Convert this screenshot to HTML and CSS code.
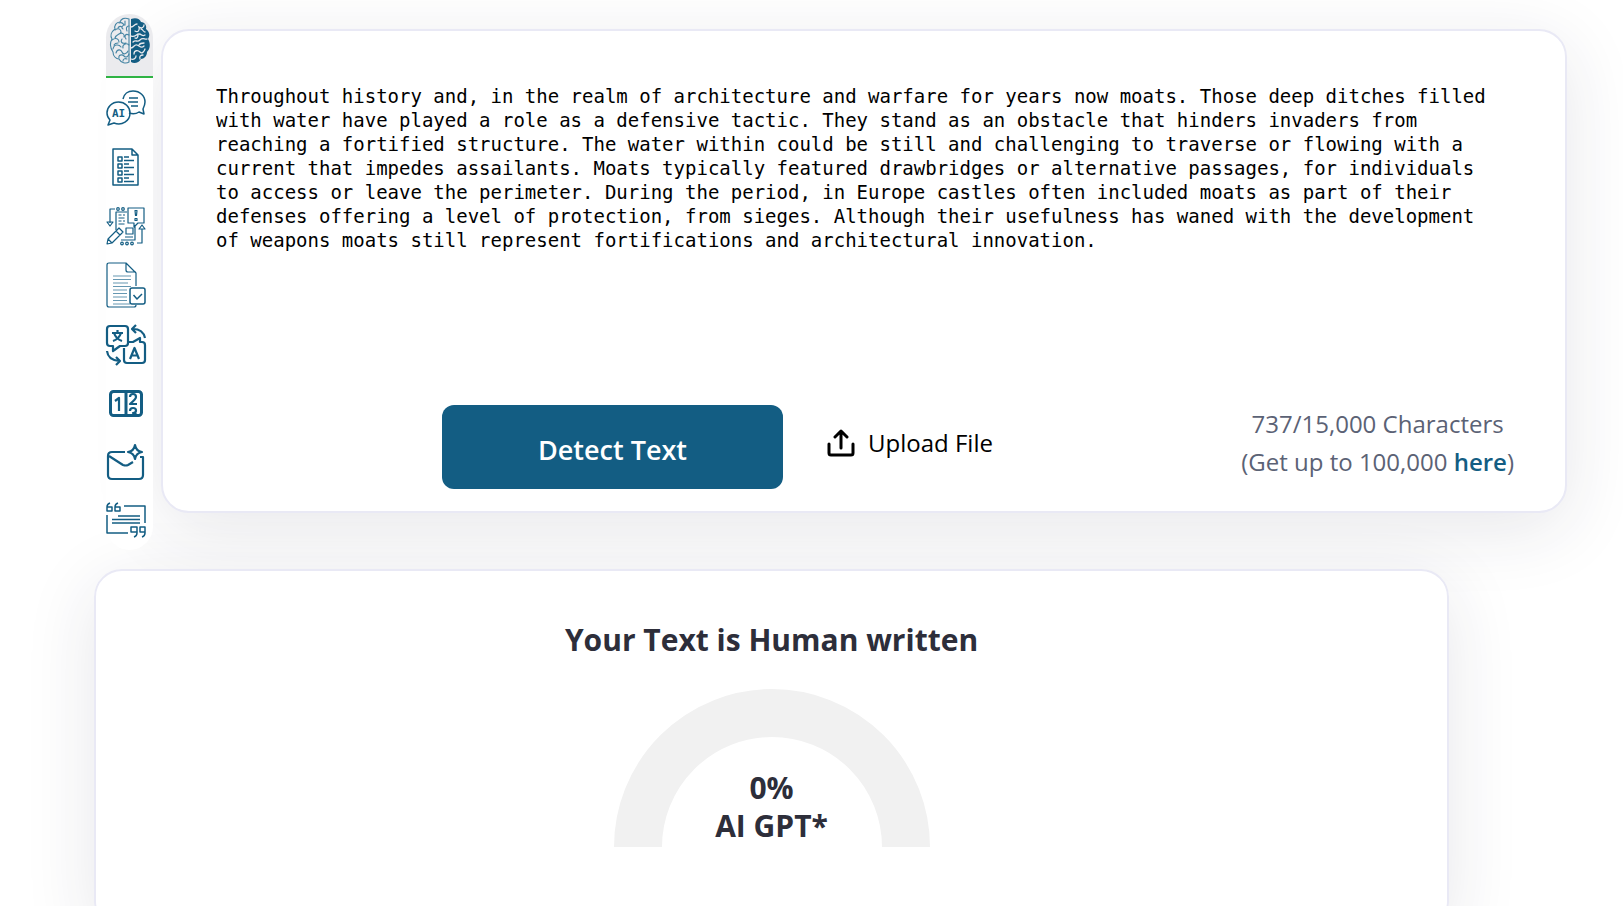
FILE: index.html
```html
<!DOCTYPE html>
<html lang="en">
<head>
<meta charset="utf-8">
<meta name="viewport" content="width=device-width, initial-scale=1">
<title>AI Detector</title>
<link rel="stylesheet" href="styles.css">
</head>
<body>
<main class="page">
  <section class="workspace">
    <nav class="tools" aria-label="Tools">
      <a class="tool tool-active" href="#detector" aria-label="AI detector">
        <svg class="icon icon-brain" viewBox="0 0 40 46">
          <path fill="#135d83" d="M21 1c5-2 9 0 10 3 4 0 6 4 5 7 4 3 4 7 2 10 3 5 2 10-1 13 0 4-3 7-6 7-2 4-7 5-10 3z"/>
          <g fill="none" stroke="#e9eaee" stroke-width="1.3" stroke-linecap="round">
            <path d="M21 9c3 0 3-3 6-3M25 13c3 2 5-1 4-4 3 2 5 0 5-2M21 18c4 2 5-2 8-2s3 3 6 1M23 24c3-3 4 1 7-2s5 0 7-1M21 30c3 0 3-4 6-3s4 4 7 1M24 36c0-4 4-4 6-2s4 0 5-3M21 41c3 1 5-1 5-3M30 41c-1-3 1-4 3-4M31 11c2 0 2 3 4 3M25 20c2 1 3-1 3-3M29 27c1-2 4-2 5-2"/>
          </g>
          <g fill="none" stroke="#4685a4" stroke-width="1.1" stroke-linecap="round">
            <path d="M19 1c-5-2-8 0-9 3-4 0-6 4-5 7-4 3-5 7-3 10-3 5-1 10 1 13 0 4 3 7 6 7 2 4 7 5 10 3z"/>
            <path d="M9 5c2-1 4 0 5 2M15 3v4c-3 0-4 3-2 4M19 8c-3 0-3 3-2 5M5 12c4-3 6 0 6 2s-5 2-6 6M9 16c3-2 6 0 5 3M19 17c-4-2-5 2-3 4M2 22c4-3 7-1 7 2M12 21c-2 3 0 5 4 4M19 27c-3-3-7 0-6 3M3 31c1-5 6-5 8-2M6 35c1-4 5-4 6-1s5 2 6-1M9 40c-1-3 3-4 5-2s4 1 5-2M13 43c0-2 2-3 4-2M4 27c1-2 3-2 4-2M8 10c1-2 3-2 4-1"/>
          </g>
        </svg>
      </a>
      <a class="tool" href="#chat" aria-label="AI chat">
        <svg class="icon line" viewBox="0 0 40 40">
          <path d="M17 11C18 6 22 3 27 3c7 0 12 5 12 11 0 3-1 5-2 7l1 5-5-2c-3 2-7 2-10 1"/>
          <path d="M12.500 14C6 14 1 19 1 25c0 3 1 5 3 7l-2 5 6-2c8 3 16-2 16-10 0-6-5-11-11.500-11z"/>
          <path d="M23 10h9M22 14h10M25 18h7"/>
          <text class="glyph" x="12.500" y="29" font-size="11">AI</text>
        </svg>
      </a>
      <a class="tool" href="#summary" aria-label="Summarizer">
        <svg class="icon line" viewBox="0 0 40 40">
          <path d="M7 2h19l6 6v30H7zM26 2v6h6"/>
          <path d="M12 10h4v4h-4zM12 17h4v4h-4zM12 24h4v4h-4zM12 31h4v4h-4z"/>
          <path d="M18 10h5M18 13.500h10M18 17h5M18 20.500h10M18 24h5M18 27.500h10M18 31h5M18 34.500h10"/>
        </svg>
      </a>
      <a class="tool" href="#paraphrase" aria-label="Paraphraser">
        <svg class="icon line thin" viewBox="0 0 40 40">
          <path d="M9 3H4v14M1 16h6l-3 4zM36 23v14h-5M33 23h6l-3-4z"/>
          <path d="M21 6H10v18M15 34h14V19M22 2h16v15h-6l-4 4v-4h-6z"/>
          <path d="M12.500 9h3M17 9h2M12.500 12h6M12.500 15h3M17 15h2M12.500 18h6M20 22h7v6h-7zM19 31h8"/>
          <path d="M2 33L13 22l4 4L6 37l-5 1zM2 33l4 4M10 25l4 4"/>
          <path d="M29 4.500h2l-.5 5h-1zM29 12.500h2v2h-2z"/>
          <g fill="#fff"><circle cx="12" cy="3" r="1.300"/><circle cx="17" cy="3" r="1.300"/><circle cx="16" cy="37.500" r="1.300"/><circle cx="21" cy="37.500" r="1.300"/><circle cx="26" cy="37.500" r="1.300"/></g>
        </svg>
      </a>
      <a class="tool" href="#grammar" aria-label="Grammar check">
        <svg class="icon icon-tall line" viewBox="0 0 40 46">
          <g stroke-width="1.200"><path d="M23 45H3q-2 0-2-2V3q0-2 2-2h17l10 10v13M30 43q0 2-2 2h-5M20 1v7q0 2 2 2h8"/>
          <path d="M7 14h18M7 17.500h18M7 21h15M7 24.500h18M7 28h14M7 31.500h14M7 35h14M7 38.500h14M7 42h17" stroke="#6698b2"/></g>
          <rect x="24" y="26" width="15" height="16" rx="2"/>
          <path d="M27.500 33l3.500 4 5-5"/>
        </svg>
      </a>
      <a class="tool" href="#translate" aria-label="Translator">
        <svg class="icon line bold" viewBox="0 0 40 40">
          <path d="M4 2h15q3 0 3 3v14q0 3-3 3h-5l-7 5v-5H4q-3 0-3-3V5q0-3 3-3z"/>
          <path d="M22 18h5l7-4v4h2q3 0 3 3v15q0 3-3 3H21q-3 0-3-3V24"/>
          <path d="M6 9h11M11.500 6v3M8 9q2 6 8 8M15 9q-2 6-8 8M30 1l-4 4 4 4M27 5q10 0 12 9M10 33l4 4-4 4M13 37Q2 36 1 27"/>
          <path d="M24 35l4.500-11L33 35M25.500 31.500h6"/>
        </svg>
      </a>
      <a class="tool" href="#counter" aria-label="Word counter">
        <svg class="icon line bold" viewBox="0 0 40 40">
          <rect class="heavy" x="4.500" y="8.500" width="31" height="24" rx="3"/>
          <path class="heavy" d="M20 8v25"/>
          <path d="M9 18l4-3v13M24 14q0-3 3-3t3 3q0 2-6 7h7M24 28q0-3 3-3t3 2.500-3 2.500q3 0 3 2"/>
        </svg>
      </a>
      <a class="tool" href="#email" aria-label="Email writer">
        <svg class="icon line bold" viewBox="0 0 40 40">
          <path d="M19 10H6q-4 0-4 4v19q0 4 4 4h27q4 0 4-4V15h-3"/>
          <path d="M3 14l14 9q3 1 5 0l5-3"/>
          <path fill="#fff" d="M29 3q1 6 7 7-6 1-7 7-1-6-7-7 6-1 7-7z"/>
        </svg>
      </a>
      <a class="tool" href="#citation" aria-label="Citation generator">
        <svg class="icon line" viewBox="0 0 40 40">
          <path d="M4 2Q1 3 1 6v4h5V6H1M12 2q-3 1-3 4v4h5V6H9M18 5h21v17M1 14v18h21"/>
          <path d="M12 15h22M6 18.500h28M6 22h28"/>
          <path d="M28 36q3-1 3-4v-6h-6v5h6M36 36q3-1 3-4v-6h-5v5h5"/>
        </svg>
      </a>
    </nav>

    <form class="card editor" id="detector">
      <textarea class="editor-text" aria-label="Text to check" spellcheck="false">Throughout history and, in the realm of architecture and warfare for years now moats. Those deep ditches filled with water have played a role as a defensive tactic. They stand as an obstacle that hinders invaders from reaching a fortified structure. The water within could be still and challenging to traverse or flowing with a current that impedes assailants. Moats typically featured drawbridges or alternative passages, for individuals to access or leave the perimeter. During the period, in Europe castles often included moats as part of their defenses offering a level of protection, from sieges. Although their usefulness has waned with the development of weapons moats still represent fortifications and architectural innovation.</textarea>
      <div class="actions">
        <button class="detect" type="button">Detect Text</button>
        <button class="upload" type="button">
          <svg class="upload-icon" viewBox="0 0 28 28"><path d="M2 15v9q0 2 2 2h20q2 0 2-2v-9M14 19V2M8 8l6-6 6 6"/></svg>
          Upload File
        </button>
        <p class="count">737/15,000 Characters<br>(Get up to 100,000 <a class="here" href="#plans">here</a>)</p>
      </div>
    </form>
  </section>

  <section class="card result">
    <h1 class="verdict">Your Text is Human written</h1>
    <div class="gauge">
      <svg class="gauge-arc" viewBox="0 0 316 158"><path d="M24 158a134 134 0 0 1 268 0"/></svg>
      <p class="score">0%<br>AI GPT*</p>
    </div>
  </section>
</main>
</body>
</html>
```

FILE: styles.css
```css
* { box-sizing: border-box; }

body {
  margin: 0;
  background: #fff;
  color: #2d2e3a;
  font-family: "Open Sans", "Noto Sans", sans-serif;
}

.page {
  display: flex;
  flex-direction: column;
  height: 100vh;
  overflow: hidden;
}

.card {
  border: 2px solid #e9e9f5;
  border-radius: 28px;
  box-shadow: 0 16px 72px rgba(32, 32, 64, 0.11);
}

.workspace {
  display: flex;
  flex: none;
  align-items: flex-start;
  gap: 8px;
  padding: 14px 56px 0 106px;
}

.tools {
  display: flex;
  flex: 0 0 47px;
  flex-direction: column;
  background: #fff;
  border-radius: 24px;
  position: relative;
  z-index: 1;
}

.tool {
  display: flex;
  align-items: center;
  height: 59px;
}

.tool-active {
  height: 64px;
  padding: 0 0 8px 4px;
  background: #ebebee;
  border-bottom: 2px solid #2fb344;
  border-radius: 24px 24px 0 0;
}

.icon { width: 40px; height: 40px; overflow: visible; }
.icon-brain, .icon-tall { height: 46px; }

.line {
  fill: none;
  stroke: #135d83;
  stroke-width: 1.5;
  stroke-linejoin: round;
}
.thin { stroke-width: 1.2; }
.bold { stroke-width: 2.2; }
.heavy { stroke-width: 3; }

.glyph {
  fill: #135d83;
  stroke: none;
  font-family: "DejaVu Sans Mono", monospace;
  font-weight: 700;
  text-anchor: middle;
}

.editor {
  flex: 1;
  margin-top: 15px;
  padding: 53px 51px 22px 53px;
  background: #fff;
}

.editor-text {
  display: block;
  width: calc(100% - 12px);
  height: 321px;
  padding: 0;
  border: 0;
  outline: 0;
  resize: none;
  background: none;
  color: #000;
  font: 19px/24px "DejaVu Sans Mono", monospace;
}

.actions {
  display: flex;
  align-items: flex-start;
  padding-left: 226px;
}

.detect {
  width: 341px;
  height: 84px;
  padding: 4px 0 0;
  border: 0;
  border-radius: 12px;
  background: #135d83;
  color: #fff;
  font: 600 27px "Open Sans", sans-serif;
}

.upload {
  display: flex;
  align-items: center;
  gap: 13px;
  margin: 18px 0 0 44px;
  padding: 0;
  border: 0;
  background: none;
  color: #000;
  font: 24px/40px "Open Sans", sans-serif;
}

.upload-icon {
  width: 28px;
  height: 28px;
  fill: none;
  stroke: #000;
  stroke-width: 3;
  stroke-linecap: round;
  stroke-linejoin: round;
}

.count {
  margin: 0 0 0 auto;
  color: #5b6275;
  font-size: 24px;
  line-height: 38px;
  text-align: center;
}

.here {
  color: #135d83;
  font-weight: 600;
  text-decoration: none;
}

.result {
  flex: none;
  min-height: 360px;
  margin: 19px 174px 0 94px;
  padding: 46px 24px 24px;
  background: rgba(255, 255, 255, 0.85);
  text-align: center;
}

.verdict {
  margin: 0 0 26px;
  font-size: 30px;
  font-weight: 700;
  line-height: 46px;
}

.gauge {
  display: grid;
  justify-content: center;
}

.gauge-arc, .score { grid-area: 1 / 1; }

.gauge-arc {
  width: 316px;
  height: 158px;
  fill: none;
  stroke: #f1f1f1;
  stroke-width: 48;
}

.score {
  align-self: end;
  margin: 0 0 2px;
  font-size: 30px;
  font-weight: 700;
  line-height: 38px;
}
```
